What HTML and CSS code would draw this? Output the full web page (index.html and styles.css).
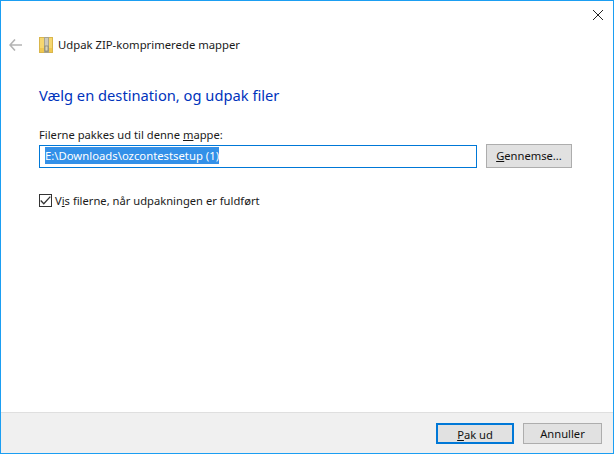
FILE: index.html
```html
<!DOCTYPE html>
<html lang="da">
<head>
<meta charset="utf-8">
<title>Udpak ZIP-komprimerede mapper</title>
<link rel="stylesheet" href="styles.css">
</head>
<body>
<div class="window">
  <div class="titlebar">
    <svg class="close" width="10" height="10" viewBox="0 0 10 10"><path d="M0 0L10 10M10 0L0 10" stroke="#222" stroke-width="1" fill="none"/></svg>
  </div>
  <div class="nav">
    <svg class="back" width="13" height="12" viewBox="0 0 13 12"><path d="M6 .5L1 6L6 11.5M1 6H13" stroke="#b4b4b4" stroke-width="1.6" fill="none"/></svg>
    <svg class="zip" width="14" height="16" viewBox="0 0 14 16">
      <rect x=".5" y=".5" width="13" height="15" fill="#f6d76f" stroke="#d9b64c"/>
      <rect x="1" y="11" width="12" height="4" fill="#f1c84f"/>
      <rect x="5" y="0" width="5" height="16" fill="#a9a48c"/>
      <path d="M6 2h3M6 4h3M6 6h3M6 8h3" stroke="#eee" stroke-width="1"/>
      <rect x="6" y="9" width="3" height="5" fill="#d8d4c0" stroke="#77735f" stroke-width=".6"/>
    </svg>
    <span class="nav-title">Udpak ZIP-komprimerede mapper</span>
  </div>
  <main class="content">
    <h1 class="heading">Vælg en destination, og udpak filer</h1>
    <label class="field-label">Filerne pakkes ud til denne <u>m</u>appe:</label>
    <div class="path-row">
      <div class="path-input"><span class="selected">E:\Downloads\ozcontestsetup (1)</span></div>
      <button class="btn browse"><u>G</u>ennemse...</button>
    </div>
    <div class="check-row">
      <span class="checkbox">
        <svg width="11" height="9" viewBox="0 0 11 9"><path d="M.7 4.5L3.8 7.8L10.3 .6" stroke="#333" stroke-width="1.3" fill="none"/></svg>
      </span>
      <span class="check-label">V<u>i</u>s filerne, når udpakningen er fuldført</span>
    </div>
  </main>
  <footer class="footer">
    <button class="btn primary"><u>P</u>ak ud</button>
    <button class="btn cancel">Annuller</button>
  </footer>
</div>
</body>
</html>
```
FILE: styles.css
```css
* { box-sizing: border-box; }
html, body { margin: 0; padding: 0; }
body {
  width: 614px;
  height: 454px;
  overflow: hidden;
  font-family: "Noto Sans", sans-serif;
  font-size: 11.2px;
  color: #1a1a1a;
  background: #fff;
}
.window {
  width: 614px;
  height: 454px;
  border: 1px solid #1b9ef2;
  display: flex;
  flex-direction: column;
  background: #fff;
}
.titlebar {
  height: 29px;
  display: flex;
  justify-content: flex-end;
  align-items: center;
  padding: 0 10px 1px 0;
  flex: none;
}
.nav {
  height: 30px;
  display: flex;
  align-items: center;
  padding-left: 8px;
  flex: none;
}
.back { margin-right: 17px; }
.zip { margin-right: 5px; }
.nav-title { font-size: 11.3px; line-height: 16px; }
.content { flex: 1; padding: 25px 0 0 38px; }
.heading {
  margin: 0;
  font-size: 14.7px;
  font-weight: 400;
  line-height: 20px;
  color: #0033bc;
}
.field-label { display: block; margin-top: 22px; line-height: 16px; }
.path-row { display: flex; align-items: center; margin-top: 1px; gap: 9px; }
.path-input {
  width: 438px;
  height: 23px;
  margin-top: 1px;
  border: 1px solid #0078d7;
  padding: 1px 0 0 5px;
  line-height: 17px;
  font-size: 11.3px;
  display: flex;
  align-items: flex-start;
}
.selected { background: #3390e8; color: #fff; }
.btn {
  font: inherit;
  color: #111;
  background: #e1e1e1;
  border: 1px solid #adadad;
  padding: 0;
  height: 24px;
  line-height: 20px;
}
.browse { width: 86px; }
.check-row { display: flex; align-items: center; margin-top: 25px; gap: 3px; }
.checkbox {
  width: 13px;
  height: 13px;
  border: 1px solid #333;
  display: flex;
  align-items: center;
  justify-content: center;
  background: #fff;
}
.footer {
  height: 41px;
  flex: none;
  background: #f0f0f0;
  border-top: 1px solid #dfdfdf;
  display: flex;
  justify-content: flex-end;
  align-items: center;
  gap: 9px;
  padding: 0 11px 0 0;
}
.primary { width: 78px; height: 21px; border: 2px solid #0078d7; }
.cancel { width: 79px; height: 21px; }
```
